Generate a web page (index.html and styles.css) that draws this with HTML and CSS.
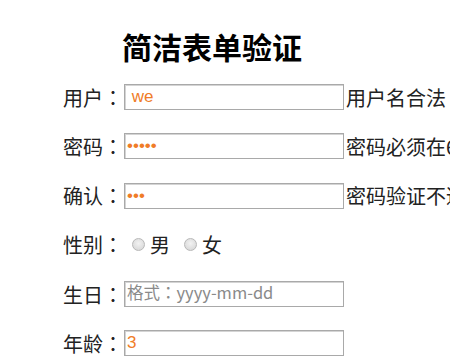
FILE: index.html
```html
<!DOCTYPE html>
<html lang="zh-CN">
<head>
    <meta charset="UTF-8">
    <meta name="viewport" content="width=device-width, initial-scale=1.0">
    <title>简洁表单验证</title>
    <link rel="stylesheet" href="styles.css">
</head>
<body>
    <div class="wrapper">
        <h1>简洁表单验证</h1>
        <form class="form">
            <div class="row">
                <label class="label">用户<span class="colon" lang="zh-TW">：</span></label>
                <input class="field" type="text" value=" we">
                <span class="tip">用户名合法</span>
            </div>
            <div class="row">
                <label class="label">密码<span class="colon" lang="zh-TW">：</span></label>
                <input class="field" type="password" value="12345">
                <span class="tip">密码必须在6-16位之间</span>
            </div>
            <div class="row">
                <label class="label">确认<span class="colon" lang="zh-TW">：</span></label>
                <input class="field" type="password" value="123">
                <span class="tip">密码验证不通过</span>
            </div>
            <div class="row">
                <label class="label">性别<span class="colon" lang="zh-TW">：</span></label>
                <label class="choice"><input class="radio" type="radio" name="sex">男</label>
                <label class="choice"><input class="radio" type="radio" name="sex">女</label>
            </div>
            <div class="row">
                <label class="label">生日<span class="colon" lang="zh-TW">：</span></label>
                <input class="field" type="text" lang="zh-TW" placeholder="格式：yyyy-mm-dd">
            </div>
            <div class="row">
                <label class="label">年龄<span class="colon" lang="zh-TW">：</span></label>
                <input class="field" type="text" value="3">
            </div>
        </form>
    </div>
</body>
</html>
```

FILE: styles.css
```css
* {
    margin: 0;
    padding: 0;
    box-sizing: border-box;
}

body {
    font-family: "Noto Sans CJK SC", "Liberation Sans", sans-serif;
    background: #ffffff;
    color: #222222;
    overflow: hidden;
}

.wrapper {
    padding: 28px 0 0 63px;
    white-space: nowrap;
}

h1 {
    font-size: 30px;
    line-height: 36px;
    font-weight: 700;
    color: #000000;
    margin-left: 59px;
    margin-bottom: 20px;
}

.form {
    display: flex;
    flex-direction: column;
    gap: 23.3px;
}

.row {
    display: flex;
    align-items: center;
    height: 26px;
    font-size: 20px;
}

.label {
    width: 61px;
    flex: none;
}

.colon {
    display: inline-block;
    width: 20px;
    text-align: center;
    font-family: "Noto Sans CJK TC", sans-serif;
}

.field {
    width: 220px;
    height: 26px;
    flex: none;
    border: 1px solid #a9a9a9;
    box-shadow: inset 1px 1px 0 #d4d4d4;
    padding: 0 2px;
    font-family: "Liberation Sans", "Noto Sans CJK SC", sans-serif;
    font-size: 17px;
    color: #f07c28;
    outline: none;
}

.field::placeholder {
    color: #8a8a8a;
    font-family: "Noto Sans CJK TC", sans-serif;
    font-size: 16.5px;
}

.tip {
    margin-left: 2px;
    font-size: 20px;
}

.choice {
    display: flex;
    align-items: center;
    margin-right: 14px;
}

.radio {
    appearance: none;
    width: 13px;
    height: 13px;
    border-radius: 50%;
    border: 1px solid #b8b8b8;
    background: radial-gradient(circle at 50% 40%, #f2f2f2 0%, #dcdcdc 70%, #cfcfcf 100%);
    margin: 0 5px 0 8px;
}

.choice + .choice .radio {
    margin-left: 0;
}
```
